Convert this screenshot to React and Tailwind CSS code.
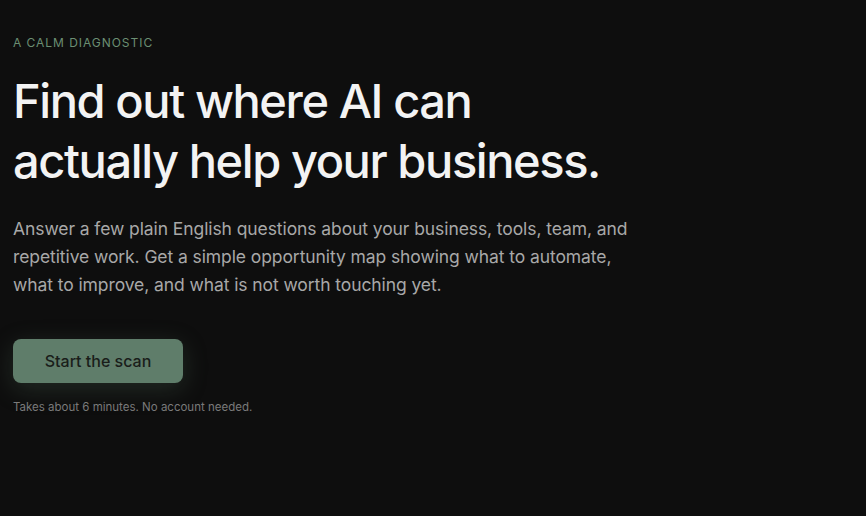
import React from "react";

const App = () => {
    return (
        <div
            className="min-h-screen w-full bg-[#0e0e0e] text-white"
            style={{ fontFamily: "Inter, 'Noto Sans', sans-serif" }}
        >
            <div className="px-[13px] pt-[35px]">
                {/* Eyebrow */}
                <p className="text-[12px] leading-[16px] tracking-[0.08em] text-[#6b8f73] uppercase">
                    A calm diagnostic
                </p>

                {/* Headline */}
                <h1 className="mt-[20px] text-[47px] leading-[60px] font-medium tracking-[-0.03em] text-[#f3f3f3]">
                    Find out where AI can
                    <br />
                    actually help your business.
                </h1>

                {/* Intro */}
                <p className="mt-[24px] max-w-[625px] text-[17.5px] leading-[28px] text-[#a8a8a8] tracking-[-0.005em]">
                    Answer a few plain English questions about your business, tools, team, and
                    repetitive work. Get a simple opportunity map showing what to automate,
                    what to improve, and what is not worth touching yet.
                </p>

                {/* CTA */}
                <button className="mt-[40px] h-[44px] w-[170px] rounded-[8px] bg-[#5f7d6a] text-[16px] font-medium text-[#1a1d1a] shadow-[0_6px_24px_rgba(95,126,104,0.25)]">
                    Start the scan
                </button>

                <p className="mt-[16px] text-[11.5px] leading-[16px] text-[#7a7a7a]">
                    Takes about 6 minutes. No account needed.
                </p>
            </div>
        </div>
    );
};

export default App;
